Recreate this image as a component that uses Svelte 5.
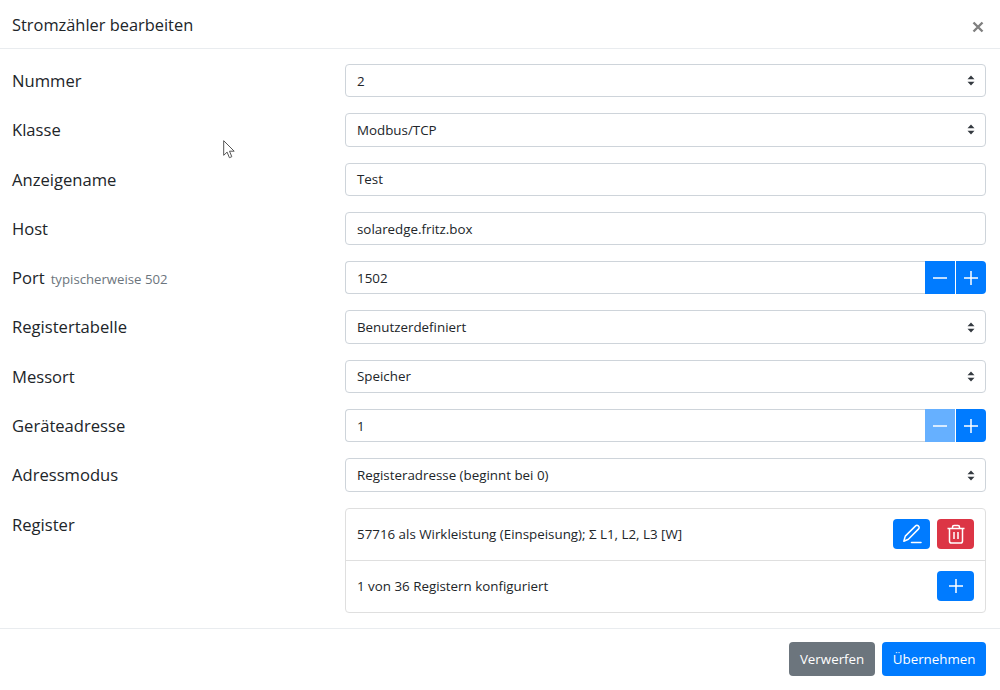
<script>
  const rows = [
    { label: 'Nummer', type: 'select', value: '2' },
    { label: 'Klasse', type: 'select', value: 'Modbus/TCP' },
    { label: 'Anzeigename', type: 'text', value: 'Test' },
    { label: 'Host', type: 'text', value: 'solaredge.fritz.box' },
    { label: 'Port', hint: 'typischerweise 502', type: 'number', value: '1502' },
    { label: 'Registertabelle', type: 'select', value: 'Benutzerdefiniert' },
    { label: 'Messort', type: 'select', value: 'Speicher' },
    { label: 'Geräteadresse', type: 'number', value: '1', minDisabled: true },
    { label: 'Adressmodus', type: 'select', value: 'Registeradresse (beginnt bei 0)' },
  ];
</script>

{#snippet plus()}
  <svg viewBox="0 0 16 16" width="16" height="16"><path d="M8 1v14M1 8h14" stroke="#fff" stroke-width="1.5" fill="none" /></svg>
{/snippet}

<div class="modal">
  <header>
    <h5>Stromzähler bearbeiten</h5>
    <svg class="close" viewBox="0 0 12 12" width="12" height="12"><path d="M1.5 1.5l9 9M10.5 1.5l-9 9" stroke="#808080" stroke-width="2.4" fill="none" /></svg>
  </header>

  <div class="body">
    {#each rows as row}
      <div class="row">
        <div class="label">{row.label}{#if row.hint}<small>{row.hint}</small>{/if}</div>
        <div class="control">
          <div class="field" class:joined={row.type === 'number'}>
            <span>{row.value}</span>
            {#if row.type === 'select'}
              <svg class="caret" viewBox="0 0 8 11" width="8" height="11"><path d="M4 0.5L7.5 4.2H0.5zM4 10.5L0.5 6.8H7.5z" fill="#343a40" /></svg>
            {/if}
          </div>
          {#if row.type === 'number'}
            <button class="btn step" class:off={row.minDisabled}>
              <svg viewBox="0 0 16 16" width="16" height="16"><path d="M1 8h14" stroke="#fff" stroke-width="1.5" fill="none" /></svg>
            </button>
            <button class="btn step last">{@render plus()}</button>
          {/if}
        </div>
      </div>
    {/each}

    <div class="row last-row">
      <div class="label">Register</div>
      <div class="list">
        <div class="item">
          <span>57716 als Wirkleistung (Einspeisung); Σ L1, L2, L3 [W]</span>
          <div class="actions">
            <button class="btn icon">
              <svg viewBox="0 0 20 20" width="20" height="20" fill="none" stroke="#fff" stroke-width="1.5" stroke-linejoin="round">
                <path d="M13.6 1.9a1.9 1.9 0 0 1 2.7 0l.3.3a1.9 1.9 0 0 1 0 2.7L6.4 15.2 1.8 17.2l1.5-5.1z" />
                <path d="M9.5 18.6H19" stroke-linecap="round" />
              </svg>
            </button>
            <button class="btn icon danger">
              <svg viewBox="0 0 20 20" width="20" height="20" fill="none" stroke="#fff" stroke-width="1.5" stroke-linejoin="round">
                <path d="M1.5 4.5h17M6.5 4.5V3a1.6 1.6 0 0 1 1.6-1.6h3.8A1.6 1.6 0 0 1 13.5 3v1.5M3.5 4.5v12.4A2.1 2.1 0 0 0 5.6 19h8.8a2.1 2.1 0 0 0 2.1-2.1V4.5M8 8v7M12 8v7" />
              </svg>
            </button>
          </div>
        </div>
        <div class="item">
          <span>1 von 36 Registern konfiguriert</span>
          <button class="btn icon">{@render plus()}</button>
        </div>
      </div>
    </div>
  </div>

  <footer>
    <button class="btn grey">Verwerfen</button>
    <button class="btn">Übernehmen</button>
  </footer>

  <!-- mouse pointer that was caught in the screenshot -->
  <svg class="cursor" viewBox="0 0 12 19" width="12" height="19">
    <path d="M0.7 0.7v14.6l3.4-3.2 2.3 5.6 2.4-1-2.3-5.5h4.7z" fill="#fff" stroke="#555" stroke-width="1" stroke-linejoin="round" />
  </svg>
</div>

<style>
  :global(body) {
    margin: 0;
    background: #fff;
  }

  .modal {
    position: relative;
    width: 1000px;
    height: 690px;
    font-family: 'Open Sans', 'Noto Sans', sans-serif;
    color: #212529;
    font-size: 13.35px;
    overflow: hidden;
  }

  header {
    height: 49px;
    box-sizing: border-box;
    border-bottom: 1px solid #e9ecef;
    display: flex;
    align-items: center;
    justify-content: space-between;
    padding: 0 16px 0 12px;
  }

  h5 {
    margin: 0;
    font-size: 16.4px;
    font-weight: 400;
  }

  .close {
    margin-top: 5px;
  }

  .body {
    height: 580px;
    box-sizing: border-box;
    padding: 15px 14px 0 12px;
    border-bottom: 1px solid #e9ecef;
  }

  .row {
    display: flex;
    height: 33.3px;
    margin-bottom: 16px;
  }

  .last-row {
    height: auto;
    margin: 0;
  }

  .label {
    width: 333px;
    flex: none;
    font-size: 16.6px;
    line-height: 34px;
  }

  .label small {
    font-size: 13.2px;
    color: #6c757d;
    margin-left: 6px;
  }

  .control {
    flex: 1;
    display: flex;
  }

  .field {
    flex: 1;
    box-sizing: border-box;
    border: 1px solid #ced4da;
    border-radius: 4px;
    display: flex;
    align-items: center;
    justify-content: space-between;
    padding: 0 10px 0 11px;
  }

  .field.joined {
    border-radius: 4px 0 0 4px;
    border-right: 0;
  }

  .btn {
    border: 0;
    border-radius: 4px;
    background: #007bff;
    color: #fff;
    font: inherit;
    padding: 0;
    display: flex;
    align-items: center;
    justify-content: center;
  }

  .step {
    width: 30px;
    border-radius: 0;
    margin-right: 1px;
  }

  .step.last {
    margin-right: 0;
    border-radius: 0 4px 4px 0;
  }

  .step.off {
    background: #66b0ff;
  }

  .list {
    flex: 1;
    height: 105px;
    box-sizing: border-box;
    border: 1px solid #dfdfdf;
    border-radius: 4px;
    display: flex;
    flex-direction: column;
  }

  .item {
    flex: 1;
    display: flex;
    align-items: center;
    justify-content: space-between;
    padding: 0 11px;
  }

  .item + .item {
    border-top: 1px solid #dfdfdf;
  }

  .actions {
    display: flex;
    gap: 7px;
  }

  .icon {
    width: 37px;
    height: 30px;
  }

  .danger {
    background: #dc3545;
  }

  footer {
    display: flex;
    justify-content: flex-end;
    gap: 7px;
    padding: 13px 14px 0 0;
  }

  footer .btn {
    height: 34px;
    padding: 0 10.5px;
  }

  footer .grey {
    padding: 0 11px;
    background: #6c757d;
  }

  .cursor {
    position: absolute;
    left: 223px;
    top: 140px;
  }
</style>
